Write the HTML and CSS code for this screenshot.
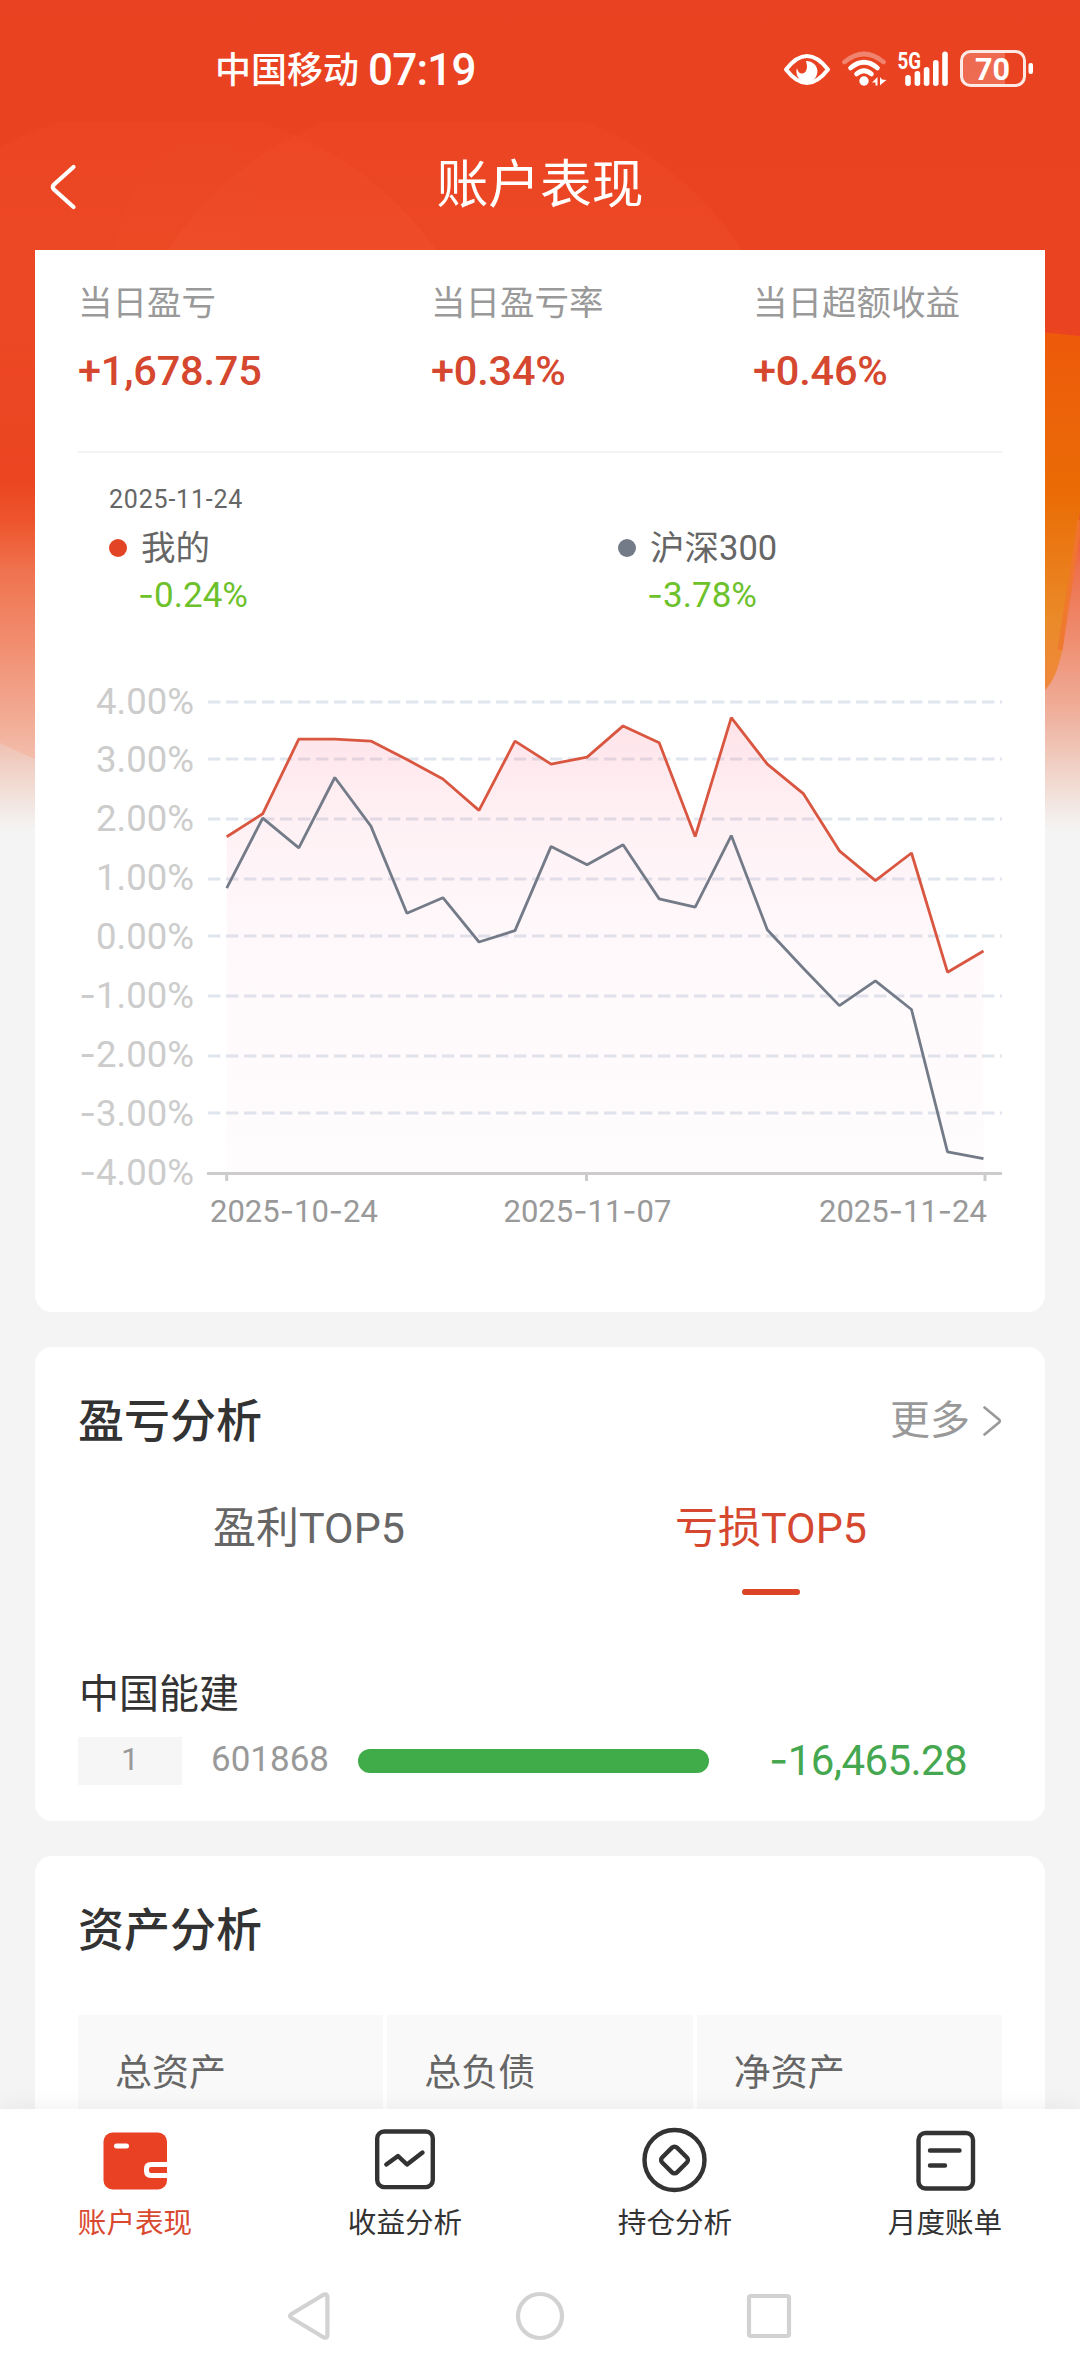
FILE: index.html
```html
<!DOCTYPE html>
<html lang="zh-CN">
<head>
  <meta charset="UTF-8">
  <meta name="viewport" content="width=device-width, initial-scale=1.0">
  <title>账户表现</title>
  <link rel="stylesheet" href="styles.css">
</head>
<body>
  <div class="page">
    <!-- Header artwork -->
    <svg class="backdrop" width="1080" height="830" viewBox="0 0 1080 830">
      <defs>
        <linearGradient id="red" x1="0" y1="0" x2="0" y2="830" gradientUnits="userSpaceOnUse">
          <stop offset="0" stop-color="#e94222"/>
          <stop offset="0.58" stop-color="#ea4420"/>
          <stop offset="0.63" stop-color="#ed552d"/>
          <stop offset="0.69" stop-color="#ee7350"/>
          <stop offset="0.77" stop-color="#ef8d70"/>
          <stop offset="0.86" stop-color="#efb09c"/>
          <stop offset="0.95" stop-color="#f1ddd5"/>
          <stop offset="1" stop-color="#f4f4f4"/>
        </linearGradient>
        <linearGradient id="orange" x1="0" y1="332" x2="0" y2="692" gradientUnits="userSpaceOnUse">
          <stop offset="0" stop-color="#ee5a0b"/>
          <stop offset="0.45" stop-color="#ea6c06"/>
          <stop offset="0.8" stop-color="#ea8a28"/>
          <stop offset="1" stop-color="#f0883f"/>
        </linearGradient>
        <linearGradient id="glow" x1="0" y1="123" x2="0" y2="780" gradientUnits="userSpaceOnUse">
          <stop offset="0" stop-color="#ff5a36" stop-opacity="0.1"/>
          <stop offset="0.2" stop-color="#ff6a3c" stop-opacity="0.13"/>
          <stop offset="0.6" stop-color="#ff6a3c" stop-opacity="0.03"/>
          <stop offset="1" stop-color="#f9a080" stop-opacity="0.3"/>
        </linearGradient>
        <clipPath id="below"><rect x="0" y="123" width="1080" height="707"/></clipPath>
      </defs>
      <rect width="1080" height="830" fill="url(#red)"/>
      <g clip-path="url(#below)">
        <circle cx="455" cy="441" r="345" fill="url(#glow)"/>
        <circle cx="160" cy="445" r="338" fill="url(#glow)"/>
        <ellipse cx="185" cy="225" rx="62" ry="90" transform="rotate(28 185 225)" fill="#f05a2c" opacity="0.1"/>
      </g>
      <path d="M1040 332 L1080 336 V512 L1063 645 Q1057 683 1040 694 Z" fill="url(#orange)"/>
      <path d="M1080 520 L1060 650" stroke="#f0762f" stroke-width="5" stroke-opacity="0.8" fill="none"/>
    </svg>

    <div class="statusbar">
      <div class="statusbar-left">
        <span class="carrier">中国移动</span>
        <span class="clock">07:19</span>
      </div>
      <svg class="status-icons" width="254" height="40" viewBox="782 49 254 40">
        <path d="M786 69.500 Q807 42.500 828 69.500 Q807 96.500 786 69.500 Z" fill="none" stroke="#fff" stroke-width="4" stroke-linejoin="round"/>
        <path d="M806 61 A10.500 10.500 0 1 1 797 68 Q798 74 803 73.500 Q809 71 806 61 Z" fill="#fff"/>
        <g fill="none" stroke="#fff" stroke-width="4.600" stroke-linecap="round">
          <path d="M844.500 62 Q864 46 883.500 62" opacity="0.35"/>
          <path d="M850.500 68 Q864 56.500 877.500 68"/>
          <path d="M856.500 74 Q864 67.500 871.500 74"/>
        </g>
        <circle cx="864" cy="81" r="4.700" fill="#fff"/>
        <path d="M877.500 77 V85.500 H875.500 V82.500 H872 Z M880 77 V85.500 L881.500 84 L886.500 80 L882 79.500 Z" fill="#fff"/>
        <text x="897.500" y="69" class="net-type" textLength="23.500" lengthAdjust="spacingAndGlyphs">5G</text>
        <g fill="#fff">
          <rect x="905.200" y="75" width="5.600" height="11" rx="2.700"/>
          <rect x="914.600" y="71" width="5.600" height="15" rx="2.700"/>
          <rect x="923.800" y="67" width="5.600" height="19" rx="2.700"/>
          <rect x="933" y="60" width="5.600" height="26" rx="2.700"/>
          <rect x="942.200" y="51.500" width="5.600" height="34.500" rx="2.700"/>
        </g>
        <path d="M1005 52 H970 Q962 52 962 60 V77 Q962 85 970 85 H1005 Z" fill="#fff" opacity="0.22"/>
        <rect x="961.500" y="51.500" width="63" height="34" rx="9" fill="none" stroke="#fff" stroke-opacity="0.88" stroke-width="3"/>
        <rect x="1028.500" y="63" width="4.500" height="11" rx="2" fill="#fff"/>
        <text x="975" y="80" class="battery-level" textLength="35" lengthAdjust="spacingAndGlyphs">70</text>
      </svg>
    </div>

    <div class="titlebar">
      <svg class="back" width="30" height="48" viewBox="0 0 30 48">
        <path d="M25.500 4 L6 21.500 Q3.500 24 6 26.500 L25.500 44" fill="none" stroke="#fff" stroke-width="4.200" stroke-linecap="round"/>
      </svg>
      <h1>账户表现</h1>
    </div>

    <div class="content">
      <div class="card performance">
        <div class="stats">
          <div class="stat">
            <div class="stat-label">当日盈亏</div>
            <div class="stat-value">+1,678.75</div>
          </div>
          <div class="stat">
            <div class="stat-label">当日盈亏率</div>
            <div class="stat-value">+0.34%</div>
          </div>
          <div class="stat">
            <div class="stat-label">当日超额收益</div>
            <div class="stat-value">+0.46%</div>
          </div>
        </div>

        <div class="legend">
          <div class="legend-date">2025-11-24</div>
          <div class="legend-row">
            <div class="legend-item">
              <div class="legend-name"><i class="dot dot-mine"></i>我的</div>
              <div class="legend-value"><span class="minus">-</span>0.24%</div>
            </div>
            <div class="legend-item">
              <div class="legend-name"><i class="dot dot-index"></i>沪深300</div>
              <div class="legend-value"><span class="minus">-</span>3.78%</div>
            </div>
          </div>
        </div>

        <svg class="chart" width="1010" height="592" viewBox="35 660 1010 592">
          <defs>
            <linearGradient id="area" x1="0" y1="717" x2="0" y2="1173" gradientUnits="userSpaceOnUse">
              <stop offset="0" stop-color="#fa3860" stop-opacity="0.14"/>
              <stop offset="0.25" stop-color="#f84a78" stop-opacity="0.075"/>
              <stop offset="0.5" stop-color="#f04a90" stop-opacity="0.035"/>
              <stop offset="1" stop-color="#f04a90" stop-opacity="0.015"/>
            </linearGradient>
          </defs>
          <g class="grid-lines">
            <path d="M208 702H1002"/>
            <path d="M208 759H1002"/>
            <path d="M208 819H1002"/>
            <path d="M208 879H1002"/>
            <path d="M208 936H1002"/>
            <path d="M208 996H1002"/>
            <path d="M208 1056H1002"/>
            <path d="M208 1113H1002"/>
          </g>
          <path fill="url(#area)" d="M226.700 836.800 L262.700 813.800 L298.800 739.200 L334.800 739.200 L370.900 741.100 L406.900 759.500 L442.900 779 L479 810.400 L515 741.100 L551.100 764.100 L587.100 757.100 L623.100 725.900 L659.200 742.800 L695.200 836.500 L731.300 717.700 L767.300 764.100 L803.300 793.600 L839.400 850.800 L875.400 880.700 L911.500 853 L947.500 972.200 L983.500 951 V1173 H226.700 Z"/>
          <path class="axis" d="M207 1173.500H1002 M226.700 1173V1181 M586.500 1173V1181 M985 1173V1181"/>
          <polyline class="line line-mine" points="226.700,836.800 262.700,813.800 298.800,739.200 334.800,739.200 370.900,741.100 406.900,759.500 442.900,779 479,810.400 515,741.100 551.100,764.100 587.100,757.100 623.100,725.900 659.200,742.800 695.200,836.500 731.300,717.700 767.300,764.100 803.300,793.600 839.400,850.800 875.400,880.700 911.500,853 947.500,972.200 983.500,951"/>
          <polyline class="line line-index" points="226.700,888.100 262.700,818.100 298.800,847.900 334.800,777.500 370.900,826.100 406.900,913.300 442.900,897.700 479,942 515,930.600 551.100,846.400 587.100,864.700 623.100,844.700 659.200,898.900 695.200,907.200 731.300,835.600 767.300,929.700 803.300,968.300 839.400,1005.600 875.400,980.900 911.500,1009.500 947.500,1151.800 983.500,1158.700"/>
          <g class="y-labels">
            <text x="194" y="713.500">4.00%</text>
            <text x="194" y="771.500">3.00%</text>
            <text x="194" y="830.500">2.00%</text>
            <text x="194" y="889.500">1.00%</text>
            <text x="194" y="948.500">0.00%</text>
            <text x="194" y="1007.500"><tspan class="minus">-</tspan>1.00%</text>
            <text x="194" y="1066.500"><tspan class="minus">-</tspan>2.00%</text>
            <text x="194" y="1125.500"><tspan class="minus">-</tspan>3.00%</text>
            <text x="194" y="1184.500"><tspan class="minus">-</tspan>4.00%</text>
          </g>
          <g class="x-labels">
            <text x="210" y="1222">2025<tspan class="minus">-</tspan>10<tspan class="minus">-</tspan>24</text>
            <text x="503.500" y="1222">2025<tspan class="minus">-</tspan>11<tspan class="minus">-</tspan>07</text>
            <text x="819" y="1222">2025<tspan class="minus">-</tspan>11<tspan class="minus">-</tspan>24</text>
          </g>
        </svg>
      </div>

      <div class="card analysis">
        <div class="card-head">
          <h2>盈亏分析</h2>
          <div class="more">更多
            <svg width="20" height="32" viewBox="0 0 20 32">
              <path d="M2.500 2.500 L17 14.500 Q18.500 16 17 17.500 L2.500 29.500" fill="none" stroke="#999" stroke-width="2.600" stroke-linecap="round"/>
            </svg>
          </div>
        </div>
        <div class="tabs">
          <div class="tab">盈利TOP5</div>
          <div class="tab active">亏损TOP5</div>
        </div>
        <div class="stock-name">中国能建</div>
        <div class="stock-row">
          <span class="rank">1</span>
          <span class="code">601868</span>
          <span class="bar"></span>
          <span class="amount"><span class="minus">-</span>16,465.28</span>
        </div>
      </div>

      <div class="card assets">
        <h2>资产分析</h2>
        <div class="asset-grid">
          <div class="asset">总资产</div>
          <div class="asset">总负债</div>
          <div class="asset">净资产</div>
        </div>
      </div>
    </div>

    <div class="bottom">
      <div class="nav">
        <div class="nav-item active">
          <svg width="68" height="68" viewBox="0 0 68 68">
            <rect x="2.500" y="6.500" width="63.500" height="57" rx="9" fill="#e84124"/>
            <path d="M15.500 20 H25.500" stroke="#fff" stroke-width="5" stroke-linecap="round"/>
            <path d="M66.500 38.500 H50 Q45.500 38.500 45.500 43 V45 Q45.500 49.500 50 49.500 H66.500" fill="none" stroke="#fff" stroke-width="5"/>
          </svg>
          <span>账户表现</span>
        </div>
        <div class="nav-item">
          <svg width="68" height="68" viewBox="0 0 68 68" fill="none" stroke="#333" stroke-width="4.400">
            <rect x="6.200" y="5.500" width="55.600" height="55.600" rx="7"/>
            <path d="M15.300 38.500 L27 30 L36 38.500 L51.500 26.500" stroke-linecap="round" stroke-linejoin="round"/>
          </svg>
          <span>收益分析</span>
        </div>
        <div class="nav-item">
          <svg width="68" height="68" viewBox="0 0 68 68" fill="none" stroke="#333" stroke-width="4.400">
            <circle cx="33.500" cy="34" r="30"/>
            <rect x="23" y="23.500" width="21" height="21" rx="3.500" transform="rotate(45 33.500 34)"/>
          </svg>
          <span>持仓分析</span>
        </div>
        <div class="nav-item">
          <svg width="68" height="68" viewBox="0 0 68 68" fill="none" stroke="#333" stroke-width="4.400">
            <rect x="7.500" y="7" width="54.500" height="55.500" rx="7"/>
            <path d="M19 24.500 H48.500 M19 39.500 H34" stroke-linecap="round"/>
          </svg>
          <span>月度账单</span>
        </div>
      </div>
      <div class="system-nav">
        <svg width="506" height="52" viewBox="287 2290 506 52" fill="none" stroke="#d2d2d2" stroke-width="4.200" stroke-linejoin="round">
          <path d="M291.500 2314 L323 2295 Q327.400 2293 327.400 2297 V2335 Q327.400 2339 323 2337 L291.500 2318 Q288.500 2316 291.500 2314 Z"/>
          <circle cx="540" cy="2316" r="22"/>
          <rect x="749" y="2296" width="40" height="40" rx="2"/>
        </svg>
      </div>
    </div>
  </div>
</body>
</html>
```

FILE: styles.css
```css
* {
  box-sizing: border-box;
}
body {
  margin: 0;
  background-color: #f4f4f4;
  font-family: Roboto, "Noto Sans CJK SC", sans-serif;
  color: #333;
}
h1, h2 {
  margin: 0;
  font-weight: 500;
}
svg {
  display: block;
}
.page {
  position: relative;
  display: flex;
  flex-direction: column;
  width: 1080px;
  height: 2376px;
  overflow: hidden;
}
/* artwork lies under the whole header */
.backdrop {
  position: absolute;
  top: 0;
  left: 0;
  z-index: -1;
}
/* Inter has the wider hyphen */
.minus {
  font-family: Inter, sans-serif;
}
.statusbar {
  display: flex;
  flex: none;
  justify-content: space-between;
  height: 123px;
  padding: 49px 44px 0 215px;
  color: #fff;
}
.statusbar-left {
  display: flex;
  gap: 9px;
  height: 42px;
  line-height: 42px;
  font-weight: 500;
}
.carrier {
  font-size: 36px;
  line-height: 44px;
}
.clock {
  font-size: 44px;
  letter-spacing: -0.8px;
}
.net-type {
  fill: #fff;
  font-size: 23px;
  font-weight: 700;
}
.battery-level {
  fill: #fff;
  font-size: 32px;
  font-weight: 700;
}
.titlebar {
  display: grid;
  flex: none;
  grid-template-columns: 160px 1fr 160px;
  align-items: center;
  height: 127px;
  color: #fff;
}
.back {
  margin-left: 48px;
}
h1 {
  font-size: 51.8px;
  line-height: 60px;
  font-weight: 400;
  text-align: center;
  padding-bottom: 2px;
}
.content {
  display: flex;
  flex: 1;
  flex-direction: column;
  gap: 35px;
  min-height: 0;
  padding: 0 35px;
  overflow: hidden;
}
.card {
  flex: none;
  background-color: #fff;
  border-radius: 17px;
}
.performance {
  height: 1062px;
  border-radius: 0 0 17px 17px;
}
.stats {
  display: grid;
  grid-template-columns: 353px 322px 1fr;
  height: 203px;
  margin: 0 43px;
  padding-top: 31px;
  border-bottom: 2px solid #f3f3f3;
}
.stat-label {
  height: 44px;
  line-height: 44px;
  font-size: 34.5px;
  color: #999;
}
.stat-value {
  margin-top: 21px;
  height: 50px;
  line-height: 50px;
  font-size: 41.5px;
  font-weight: 500;
  letter-spacing: -0.2px;
  color: #d5482f;
}
.legend {
  height: 207px;
  padding: 31px 0 0 74px;
  color: #666;
}
.legend-date {
  height: 32px;
  line-height: 32px;
  font-size: 25px;
  letter-spacing: 0.8px;
}
.legend-row {
  display: flex;
  margin-top: 6px;
}
.legend-item {
  flex: none;
  width: 509px;
}
.legend-name {
  display: flex;
  align-items: center;
  height: 46px;
  font-size: 34.5px;
}
.dot {
  width: 18px;
  height: 18px;
  margin: 6px 14px 0 0;
  border-radius: 50%;
}
.dot-mine {
  background-color: #e34426;
}
.dot-index {
  background-color: #747b88;
}
.legend-value {
  height: 46px;
  margin-top: 3px;
  padding-left: 29px;
  line-height: 46px;
  font-size: 35px;
  color: #6dc12b;
}
.grid-lines {
  stroke: #e0e6ee;
  stroke-width: 3;
  stroke-dasharray: 12.4 5.6;
}
.axis {
  fill: none;
  stroke: #ccc;
  stroke-width: 3;
}
.line {
  fill: none;
  stroke-width: 2.8;
  stroke-linejoin: bevel;
}
.line-mine {
  stroke: #d95640;
}
.line-index {
  stroke: #747b88;
}
.y-labels {
  fill: #ccc;
  font-size: 36.5px;
  text-anchor: end;
}
.x-labels {
  fill: #999;
  font-size: 31px;
}
.analysis {
  height: 474px;
  padding: 46px 43px 0;
}
h2 {
  font-size: 46px;
  line-height: 56px;
}
.card-head {
  display: flex;
  justify-content: space-between;
  align-items: center;
}
.more {
  display: flex;
  align-items: center;
  gap: 12px;
  font-size: 40px;
  line-height: 56px;
  color: #999;
}
.tabs {
  display: grid;
  grid-template-columns: 1fr 1fr;
  margin-top: 49px;
}
.tab {
  display: flex;
  flex-direction: column;
  align-items: center;
  height: 98px;
  line-height: 60px;
  font-size: 43px;
  color: #666;
}
.tab.active {
  color: #d5482f;
}
.tab.active::after {
  content: "";
  width: 58px;
  height: 6px;
  margin-top: 31px;
  border-radius: 3px;
  background-color: #dc4428;
}
.stock-name {
  margin-top: 71px;
  padding-left: 1px;
  line-height: 56px;
  font-size: 40px;
}
.stock-row {
  display: flex;
  align-items: center;
  height: 48px;
  margin-top: 14px;
}
.rank {
  width: 104px;
  height: 48px;
  line-height: 45px;
  background-color: #f6f6f6;
  font-size: 32px;
  text-align: center;
  color: #999;
}
.code {
  width: 176px;
  padding: 0 0 3px 29px;
  font-size: 35px;
  color: #999;
}
.bar {
  width: 351px;
  height: 24px;
  border-radius: 12px;
  background-color: #3fab49;
}
.amount {
  width: 258px;
  padding-bottom: 3px;
  font-size: 42px;
  letter-spacing: -0.6px;
  text-align: right;
  color: #45a850;
}
.assets {
  height: 400px;
  padding: 46px 43px 0;
}
.asset-grid {
  display: grid;
  grid-template-columns: repeat(3, 1fr);
  gap: 4px;
  margin-top: 57px;
}
.asset {
  height: 180px;
  padding: 31px 0 0 37px;
  line-height: 56px;
  font-size: 37px;
  color: #666;
  background-color: #f9f9f9;
}
.bottom {
  flex: none;
  height: 267px;
  background-color: #fff;
  box-shadow: 0 -4px 20px rgba(0, 0, 0, 0.05);
}
.nav {
  display: flex;
  height: 157px;
  padding-top: 17px;
}
.nav-item {
  display: flex;
  flex: 1;
  flex-direction: column;
  align-items: center;
  line-height: 40px;
  font-size: 28.6px;
}
.nav-item span {
  margin-top: 9px;
}
.nav-item.active {
  color: #d9492f;
}
.system-nav {
  display: flex;
  justify-content: center;
  padding-top: 24px;
}
```
